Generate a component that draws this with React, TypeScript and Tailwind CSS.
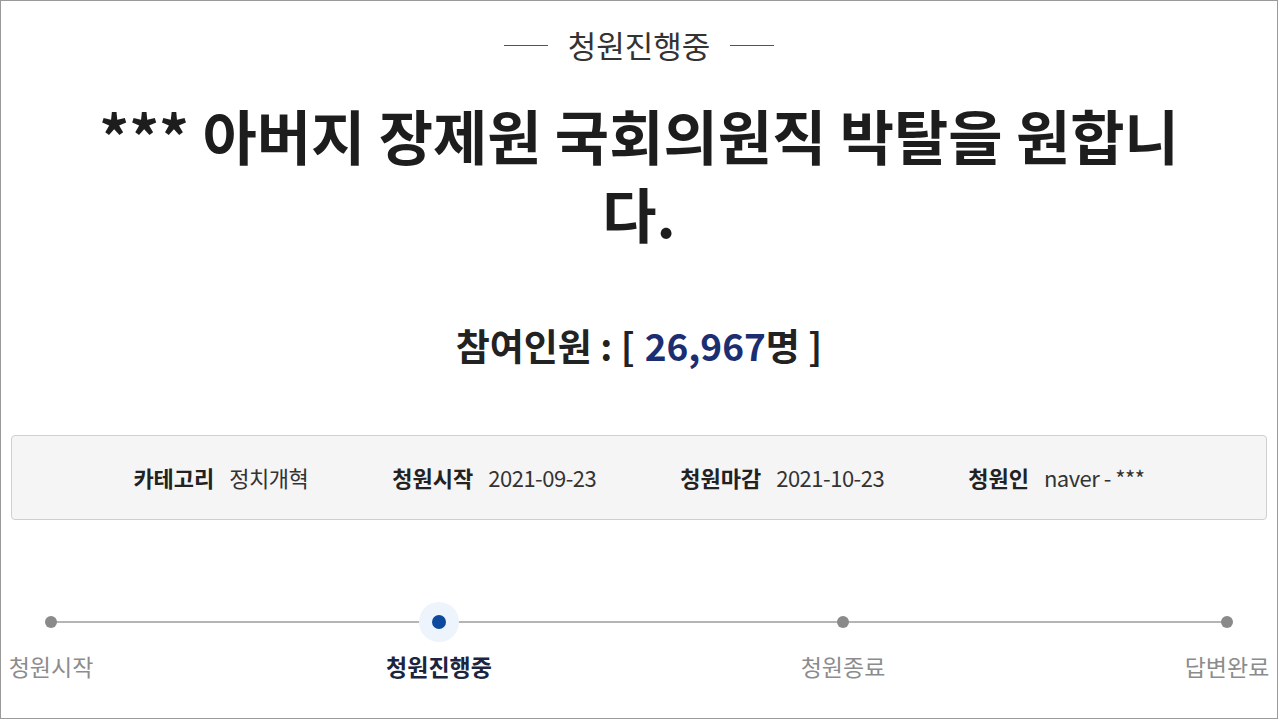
import React from 'react'

const FONT = { fontFamily: '"Noto Sans CJK KR", "Noto Sans", sans-serif' }

const INFO: Array<{ label: string; value: string }> = [
  { label: '카테고리', value: '정치개혁' },
  { label: '청원시작', value: '2021-09-23' },
  { label: '청원마감', value: '2021-10-23' },
  { label: '청원인', value: 'naver - ***' },
]

// spacing between step columns is uneven in the original, keep it
const STEPS: Array<{ label: string; active?: boolean; gap: string }> = [
  { label: '청원시작', gap: 'ml-0' },
  { label: '청원진행중', active: true, gap: 'ml-[288px]' },
  { label: '청원종료', gap: 'ml-[304px]' },
  { label: '답변완료', gap: 'ml-[284px]' },
]

export default function App() {
  return (
    <div style={FONT} className="w-[1280px] h-[720px] bg-white overflow-hidden">
      <div className="w-[1278px] h-[719px] border border-[#9a9a9a] flex flex-col items-center">
        {/* status heading */}
        <div className="mt-[22px] flex items-center gap-[20px] text-[#333] text-[31px] leading-[44px]">
          <span className="block w-[44px] h-px bg-[#555]" />
          <span>청원진행중</span>
          <span className="block w-[44px] h-px bg-[#555]" />
        </div>

        {/* title */}
        <h1 className="mt-[29px] w-[1110px] text-center font-bold text-[#1d1d1d] text-[59px] leading-[78px]">
          *** 아버지 장제원 국회의원직 박탈을 원합니다.
        </h1>

        {/* participants */}
        <div className="mt-[69px] flex items-center font-bold text-[#222] text-[37px] leading-[48px]">
          <span>참여인원 : [ </span>
          <span className="text-[#1c2e72] ml-[10px]">26,967</span>
          <span>명 ]</span>
        </div>

        {/* info box */}
        <div className="mt-[66px] w-[1256px] h-[85px] self-start ml-[10px] rounded-[4px] border border-[#cfcfcf] bg-[#f5f5f5] flex items-center justify-center gap-[84px] text-[22px] text-[#222]">
          {INFO.map(({ label, value }) => (
            <div key={label} className="flex items-center gap-[15px]">
              <span className="font-bold">{label}</span>
              <span className="text-[#333] tracking-[-0.5px]">{value}</span>
            </div>
          ))}
        </div>

        {/* progress */}
        <div className="relative mt-[87px] w-[1276px] self-start flex">
          <div className="absolute left-[50px] right-[50px] top-[14px] h-[2px] bg-[#b5b5b5]" />
          {STEPS.map(({ label, active, gap }) => (
            <div key={label} className={`relative w-[100px] flex flex-col items-center ${gap}`}>
              <div className="h-[30px] flex items-center justify-center">
                {active ? (
                  <div className="w-[40px] h-[40px] rounded-full bg-[#edf4fc] flex items-center justify-center">
                    <div className="w-[14px] h-[14px] rounded-full bg-[#0d4a9e]" />
                  </div>
                ) : (
                  <div className="w-[12px] h-[12px] rounded-full bg-[#8a8a8a]" />
                )}
              </div>
              <span
                className={`mt-[13px] whitespace-nowrap text-[23px] leading-[32px] ${
                  active ? 'font-bold text-[#1b2540]' : 'text-[#8c8c8c]'
                }`}
              >
                {label}
              </span>
            </div>
          ))}
        </div>
      </div>
    </div>
  )
}
